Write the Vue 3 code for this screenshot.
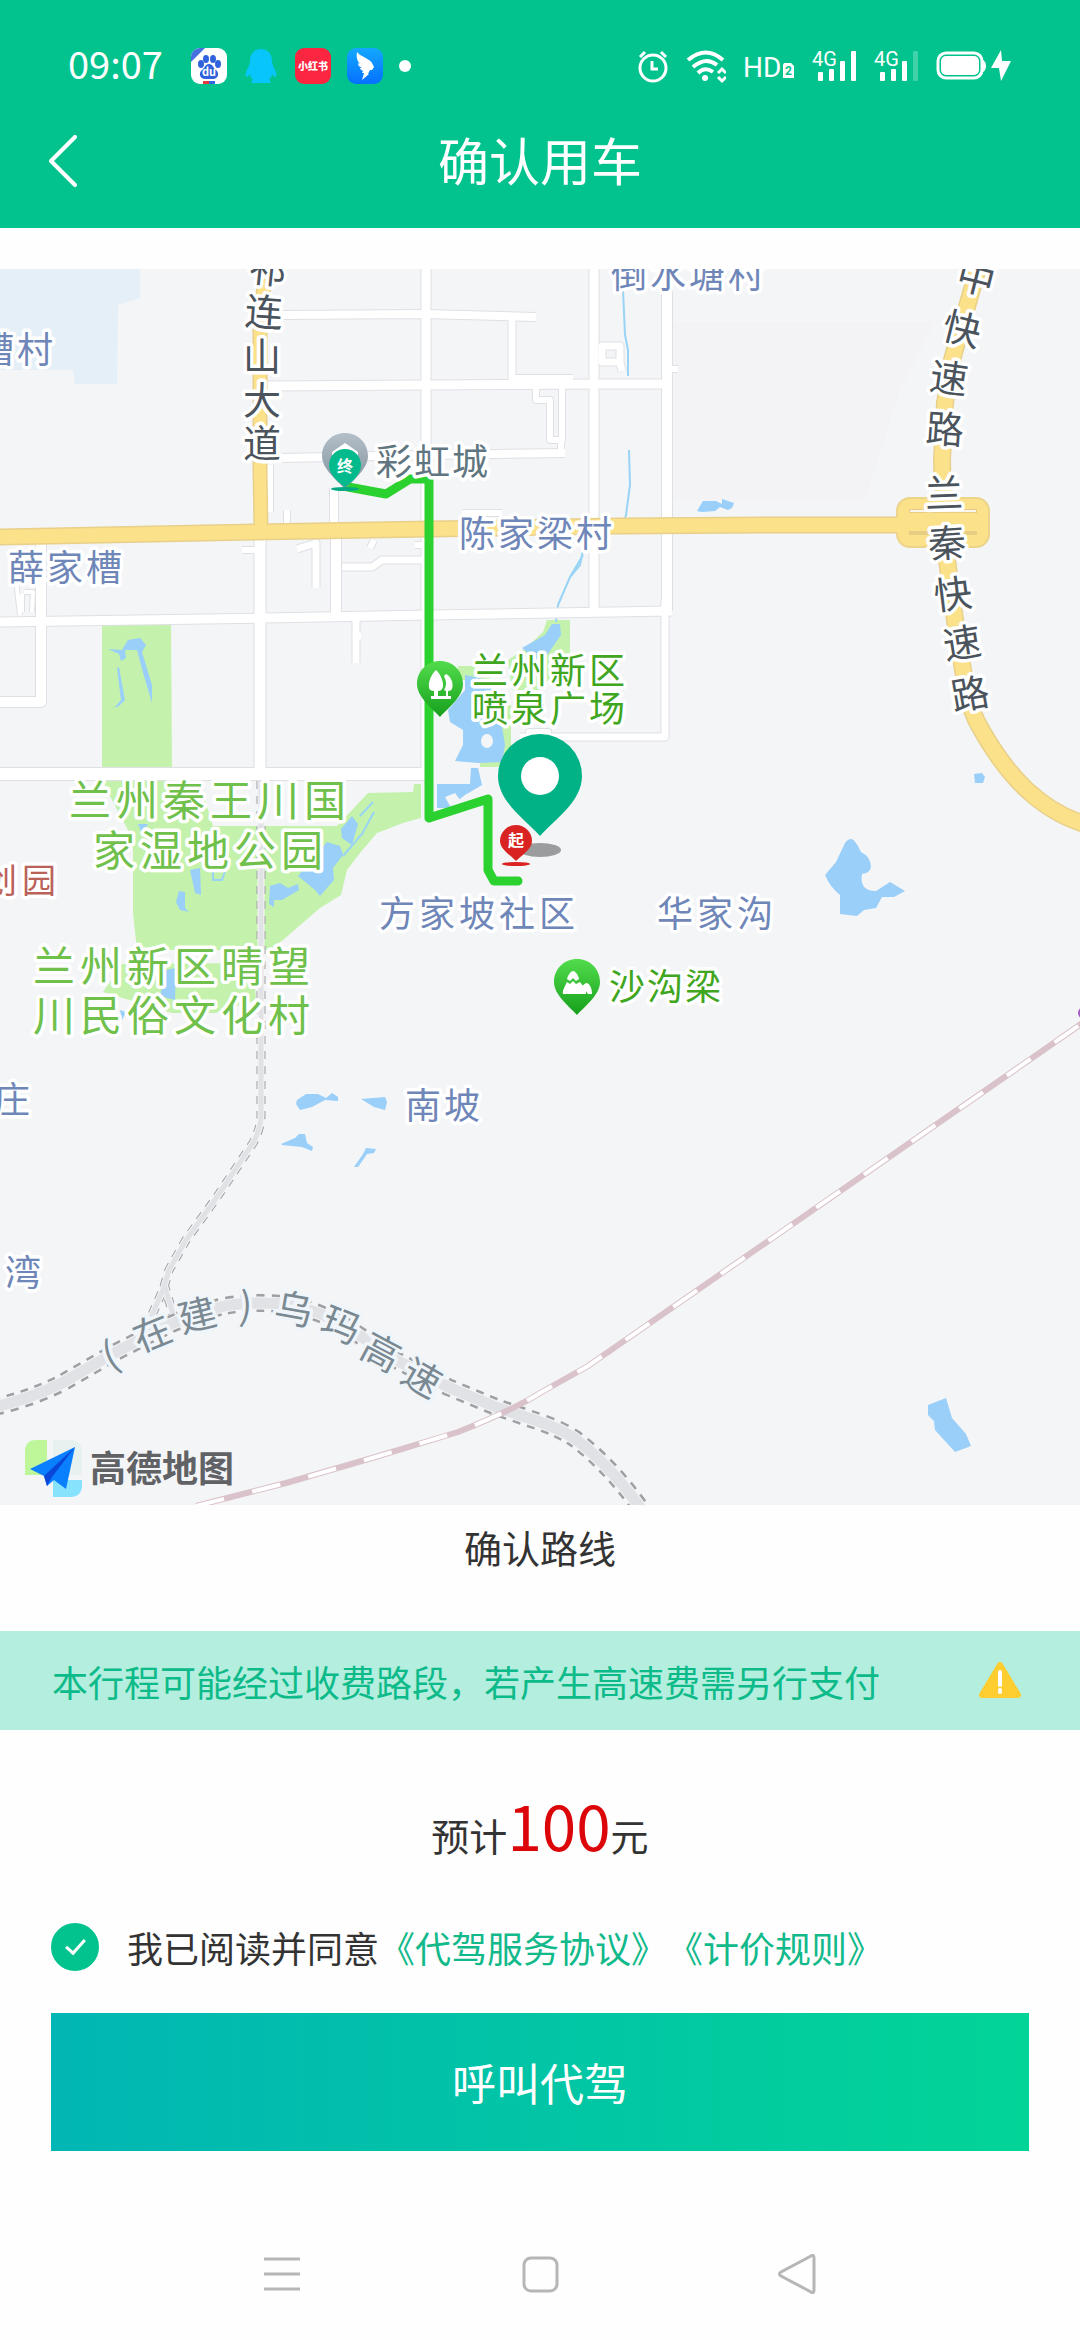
<script setup>
import { ref } from 'vue'

const agreed = ref(true)

const range = (n) => Array.from({ length: n }, (_, i) => i)
const spread = (label) => range(label.t.length).map((i) => label.x + i * label.step).join(' ')

const streets = [
  { d: 'M426 262V779', w: 9 },
  { d: 'M280 315L425 314L536 317', w: 8 },
  { d: 'M512 317V380', w: 7 },
  { d: 'M268 386L425 385L600 384L668 384', w: 9 },
  { d: 'M283 458L425 455L565 453', w: 8 },
  { d: 'M594 262V612', w: 9 },
  { d: 'M667 285V611', w: 10 },
  { d: 'M665 600V737H520', w: 7 },
  { d: 'M-5 622L265 618L430 615L672 611', w: 9 },
  { d: 'M41 540V702H-5', w: 10 },
  { d: 'M16 580L20 615M24 592H33L32 612M22 594V612', w: 4 },
  { d: 'M260 535V778', w: 11 },
  { d: 'M-5 774H425', w: 12 },
  { d: 'M334 488V528', w: 8 },
  { d: 'M336 538V614', w: 10 },
  { d: 'M356 617V663M356 636H361', w: 7 },
  { d: 'M242 550H256', w: 6 },
  { d: 'M297 549L316 543V588', w: 7 },
  { d: 'M342 567H372L382 560H426', w: 7 },
  { d: 'M270 465V512M287 510V528M374 540L370 548M415 545H426', w: 6 },
  { d: 'M602 346H620V362H602ZM620 362L622 371', w: 7 },
  { d: 'M515 378H573M536 386V400H550V440H562V386M540 453H561V442', w: 6 },
  { d: 'M672 369H678M462 513H502M529 740V732H548V740', w: 6 }
]

const highways = [
  { d: 'M-5 537L255 532L430 529L620 526L764 525H900', w: 14 },
  { d: 'M266 262L260 330V470L261 530', w: 12 },
  { d: 'M980 262L970 296L952 360L945 403L942 460L943 500L947 560L955 620L963 670Q967 700 976 720Q1000 765 1027 790T1085 824', w: 15 }
]

const greens = [
  'M102 625H171L172 768H102Z',
  'M103 781H170L185 790L205 800L213 826H337L368 793L413 792L414 784H421V818L403 823L377 833L360 853L347 870L341 895L320 908L283 940L270 950H137L133 913V850L128 830L112 800Z',
  'M103 992L122 964L253 963L256 1000L215 1013H172Z',
  'M508 660L527 647L543 632L547 620H570V655L540 690H512Z',
  'M458 666H490V680H458ZM496 705H511V767H480V760L500 755Z'
]

const waters = [
  'M108 649L122 650L128 640L140 638L146 645L142 652L152 685V703L144 676L137 650H125L126 658L121 661L119 654Z',
  'M119 667L125 700L119 706L114 708L121 700L117 668Z',
  'M190 870L200 868L201 895L195 893ZM179 891L185 892V908L189 912L180 910L176 902Z',
  'M138 824H148L142 834ZM166 970L176 968L175 1000L160 996ZM120 1010L126 1012L122 1020Z',
  'M327 842L340 846L343 855L333 868L334 880L320 896L315 890L298 876ZM341 829L352 816L358 824L352 845L342 838ZM270 886L280 883L288 888L298 884L299 890L282 900L274 900V907L269 904Z',
  'M465 675L490 680L496 690L505 745L502 762L478 763L455 761L463 745V730L450 722L448 710L465 690Z',
  'M522 648L545 635L552 624H560L561 635L552 648L540 665L530 655Z',
  'M471 768H478L482 785L465 795L448 808H437V784H470Z',
  'M697 511L703 501L716 501L722 504V499L734 503L732 508L728 510L720 507L715 511L702 512Z',
  'M974 774L982 773L985 777L983 783H975Z',
  'M851 839Q855 839 861 852Q871 857 871 867Q870 873 862 874Q859 891 876 891L890 882L905 891L894 897H882L876 908L864 910L857 916L840 914V895Q830 887 825 875L836 862L845 843Q848 839 851 839Z',
  'M297 1100L306 1094L318 1094L326 1098L332 1093L338 1097V1101L325 1100L312 1107L300 1110L296 1104Z',
  'M361 1099L385 1097L387 1102L385 1110L374 1107Z',
  'M281 1144L295 1138L299 1134L305 1134L307 1143L313 1147L312 1151L302 1147L282 1145Z',
  'M366 1148L376 1149L374 1153L367 1154L358 1167L354 1167L363 1154Z',
  'M928 1405L946 1398L952 1418L966 1434L971 1446L955 1452L935 1430L934 1421L928 1415Z'
]

const labels = [
  { t: '槽村', x: -4, y: 363, step: 39, c: 'town' },
  { t: '薛家槽', x: 26, y: 581, step: 39, c: 'town' },
  { t: '彩虹城', x: 394, y: 475, step: 38, c: 'poi' },
  { t: '陈家梁村', x: 477, y: 547, step: 39, c: 'town' },
  { t: '倒水塘村', x: 629, y: 288, step: 39, c: 'town' },
  { t: '创园', x: 0, y: 893, step: 39, c: 'mall' },
  { t: '兰州秦王川国', x: 90, y: 816, step: 47, c: 'park' },
  { t: '家湿地公园', x: 114, y: 866, step: 47, c: 'park' },
  { t: '兰州新区晴望', x: 54, y: 982, step: 47, c: 'park' },
  { t: '川民俗文化村', x: 54, y: 1031, step: 47, c: 'park' },
  { t: '兰州新区', x: 490, y: 684, step: 39, c: 'scenic' },
  { t: '喷泉广场', x: 490, y: 722, step: 39, c: 'scenic' },
  { t: '沙沟梁', x: 627, y: 1000, step: 38, c: 'scenic' },
  { t: '方家坡社区', x: 397, y: 927, step: 40, c: 'town' },
  { t: '华家沟', x: 675, y: 927, step: 40, c: 'town' },
  { t: '南坡', x: 423, y: 1119, step: 39, c: 'town' },
  { t: '庄', x: 12, y: 1113, step: 39, c: 'town' },
  { t: '湾', x: 23, y: 1286, step: 39, c: 'town' }
]

const roadNames = [
  { t: '祁', x: 268, y: 269, r: 6 }, { t: '连', x: 264, y: 312, r: 4 },
  { t: '山', x: 262, y: 356, r: 0 }, { t: '大', x: 262, y: 400, r: 0 },
  { t: '道', x: 262, y: 443, r: 0 },
  { t: '中', x: 976, y: 278, r: 14 }, { t: '快', x: 962, y: 329, r: 14 },
  { t: '速', x: 949, y: 378, r: 8 }, { t: '路', x: 945, y: 429, r: 4 },
  { t: '兰', x: 944, y: 493, r: -2 }, { t: '秦', x: 947, y: 543, r: -4 },
  { t: '快', x: 953, y: 594, r: -7 }, { t: '速', x: 962, y: 643, r: -9 },
  { t: '路', x: 970, y: 694, r: -10 }
]

const plannedNames = [
  { t: '(', x: 110, y: 1355, r: -24 }, { t: '在', x: 152, y: 1333, r: -22 },
  { t: '建', x: 197, y: 1315, r: -14 }, { t: ')', x: 246, y: 1306, r: 4 },
  { t: '乌', x: 294, y: 1309, r: 10 }, { t: '玛', x: 341, y: 1325, r: 22 },
  { t: '高', x: 381, y: 1352, r: 28 }, { t: '速', x: 422, y: 1378, r: 30 }
]

const planned = [
  { d: 'M261 781V1115Q261 1128 253 1143L217 1197L186 1240L169 1270L163 1290L151 1317M164 1284L177 1327', w: 9, in: 5 },
  { d: 'M-6 1407Q30 1399 62 1383L114 1353L155 1332Q190 1314 220 1307T293 1305Q320 1312 344 1325L396 1360L448 1387L496 1407L540 1422Q560 1429 574 1438Q610 1465 642 1510', w: 18, in: 11 }
]

const railway = 'M196 1506L286 1483L372 1458L458 1432Q515 1409 540 1393L588 1366L1084 1022'
</script>

<template>
  <div class="page">
    <header class="top">
      <div class="status">
        <span class="time">09:07</span>
        <div class="apps">
          <svg width="36" height="36" viewBox="0 0 36 36">
            <defs><clipPath id="tile"><rect width="36" height="36" rx="9" /></clipPath></defs>
            <g clip-path="url(#tile)">
              <rect width="36" height="36" fill="#fff" />
              <path d="M0 0H14L0 14Z" fill="#4571e0" />
              <path d="M12 33H18V36H12Z" fill="#e43b3b" /><path d="M18 33H24V36H18Z" fill="#3567e0" />
            </g>
            <g fill="#2f62dd">
              <ellipse cx="10" cy="16" rx="3" ry="4" /><ellipse cx="15" cy="11" rx="3" ry="4" />
              <ellipse cx="22" cy="11" rx="3" ry="4" /><ellipse cx="27" cy="16" rx="3" ry="4" />
              <path d="M18 16C22 16 22 20 25 22C29 25 27 31 22 31H14C9 31 7 25 11 22C14 20 14 16 18 16Z" />
            </g>
            <text x="18" y="28" text-anchor="middle" font-size="11" font-weight="700" fill="#fff">du</text>
          </svg>
          <svg width="36" height="36" viewBox="0 0 36 36">
            <path fill="#08c5fb" d="M18 1C25 1 29 6 29 13C29 16 30 17 31 20C34 25 34 29 32 29C31 29 29 26 29 26C29 29 27 31 26 32C28 33 28 35 27 35H9C8 35 8 33 10 32C9 31 7 29 7 26C7 26 5 29 4 29C2 29 2 25 5 20C6 17 7 16 7 13C7 6 11 1 18 1Z" />
          </svg>
          <svg width="36" height="36" viewBox="0 0 36 36">
            <rect width="36" height="36" rx="9" fill="#fd2640" />
            <text x="18" y="22" text-anchor="middle" font-size="10" font-weight="900" fill="#fff">小红书</text>
          </svg>
          <svg width="36" height="36" viewBox="0 0 36 36">
            <defs><linearGradient id="wing" x2="0" y2="1"><stop stop-color="#14a8ff" /><stop offset="1" stop-color="#0570ff" /></linearGradient></defs>
            <rect width="36" height="36" rx="9" fill="url(#wing)" />
            <path fill="#fff" d="M10 4C14 9 22 10 25 15L27 19L25 22H23L21 26H22L15 32L17 25H15L16 23C14 22 13 21 13 20H15C12 19 11 17 11 15L13 16C10 13 9 9 10 4Z" />
          </svg>
          <i class="more"></i>
        </div>
        <div class="signals">
          <svg width="32" height="36" viewBox="0 0 32 36" fill="none" stroke="#fff" stroke-width="3">
            <circle cx="16" cy="20" r="13" /><path d="M15 13V21H21M3 9L8 4M29 9L24 4" />
          </svg>
          <svg width="40" height="36" viewBox="0 0 40 36" fill="none" stroke="#fff" stroke-width="4">
            <path d="M2 12Q20 -3 37 12M7 19Q20 8 31 17M12 25Q19 18 27 24" />
            <circle cx="19" cy="30" r="3" fill="#fff" stroke="none" />
            <path d="M32 25L36 21L40 25M32 29L36 33L40 29" stroke-width="3" />
          </svg>
          <svg class="narrow" width="52" height="36" viewBox="0 0 52 36" fill="#fff">
            <text x="0" y="29" font-size="28">HD</text>
            <path d="M41 15H48L51 18V30H40V17Z" /><text x="42" y="27" font-size="12" font-weight="700" fill="#02c38e">2</text>
          </svg>
          <svg v-for="n in 2" :key="n" class="narrow" width="45" height="36" viewBox="0 0 45 36" fill="#fff">
            <text x="0" y="18" font-size="20">4G</text>
            <rect x="6" y="24" width="5" height="9" rx="1" /><rect x="17" y="21" width="5" height="12" rx="1" />
            <rect x="28" y="13" width="5" height="20" rx="1" />
            <rect x="39" y="3" width="5" height="30" rx="1" :opacity="n === 2 ? 0.25 : 1" />
          </svg>
          <svg width="75" height="36" viewBox="0 0 75 36" fill="#fff">
            <rect x="2" y="5" width="44" height="25" rx="8" fill="none" stroke="#fff" stroke-width="3" />
            <rect x="5" y="8" width="38" height="19" rx="5" /><path d="M47 12Q50 14 50 18T47 24Z" />
            <path d="M65 2L55 20H63L65 33L75 13H66Z" />
          </svg>
        </div>
      </div>
      <div class="bar">
        <button class="back" type="button" aria-label="返回">
          <svg width="28" height="52" viewBox="0 0 28 52" fill="none" stroke="#fff" stroke-width="4" stroke-linecap="round" stroke-linejoin="round"><path d="M26 2L2 26L26 50" /></svg>
        </button>
        <h1>确认用车</h1>
      </div>
    </header>

    <svg class="map" viewBox="0 269 1080 1236">
      <defs>
        <linearGradient id="leaf" x2="0" y2="1"><stop stop-color="#52dc4c" /><stop offset="1" stop-color="#169f1c" /></linearGradient>
        <linearGradient id="steel" x2="0" y2="1"><stop stop-color="#b4bfc8" /><stop offset="1" stop-color="#7f909c" /></linearGradient>
        <path id="pin" d="M0 -56C13 -56 23 -46 23 -33C23 -20 8 -9 0 0C-8 -9 -23 -20 -23 -33C-23 -46 -13 -56 0 -56Z" />
      </defs>
      <rect y="269" width="1080" height="1236" fill="#f4f5f7" />
      <path fill="#f3f3f6" d="M672 322H935L900 390L865 500H672Z" />
      <path fill="#e4eff7" d="M0 269H140V298L118 305L117 384H75L73 370H0Z" />
      <path v-for="d in greens" :key="d" :d="d" fill="#c4f2ac" />
      <path v-for="d in waters" :key="d" :d="d" fill="#99cff9" />
      <ellipse cx="487" cy="741" rx="6" ry="7" fill="#f4f5f7" />
      <path d="M445 797L455 793L460 800L450 806Z" fill="#f4f5f7" />
      <g fill="none" stroke="#99d3f5" stroke-width="2">
        <path d="M623 290L625 335L628 350V376M629 450L630 485L626 515L622 526M558 605L570 577L583 555M570 577L580 565L583 550M558 605L556 622" />
        <path d="M343 856L362 834L374 812M213 872V880H222L226 868M360 816L373 802" />
      </g>

      <g v-for="p in planned" :key="p.d" fill="none">
        <path :d="p.d" stroke="#9fa0a4" :stroke-width="p.w" stroke-dasharray="8 7" />
        <path :d="p.d" stroke="#f4f5f7" :stroke-width="p.in + 2" />
        <path :d="p.d" stroke="#e1e2e5" :stroke-width="p.in" />
      </g>
      <g fill="none">
        <path :d="railway" stroke="#d9c2ca" stroke-width="6" />
        <path :d="railway" stroke="#fff" stroke-width="4" stroke-dasharray="29 29" />
      </g>
      <circle cx="1084" cy="1013" r="6" fill="#a35ac4" />

      <g fill="none" stroke-linejoin="round">
        <path v-for="s in streets" :key="s.d" :d="s.d" stroke="#dfe0e5" :stroke-width="s.w + 2" />
        <path v-for="s in streets" :key="s.d" :d="s.d" stroke="#fff" :stroke-width="s.w" />
        <path v-for="s in highways" :key="s.d" :d="s.d" stroke="#e8d08a" :stroke-width="s.w + 3" />
        <rect x="897" y="498" width="92" height="49" rx="13" fill="#fbe18a" stroke="#ecd48a" stroke-width="2" />
        <path v-for="s in highways" :key="s.d" :d="s.d" stroke="#fbe18a" :stroke-width="s.w" />
        <path d="M909 511H977M909 533H977" stroke="#e6cd83" stroke-width="4" />
        <path d="M910 511H976" stroke="#f8f6ee" stroke-width="2" />
        <path d="M518 881H494L488 870V799L429 818V479H410L386 494L348 487" stroke="#2bd12f" stroke-width="9" stroke-linecap="round" />
      </g>

      <text v-for="l in labels" :key="l.t" class="label" :class="l.c" :x="spread(l)" :y="l.y">{{ l.t }}</text>
      <text v-for="(n, i) in roadNames" :key="'r' + i" class="label road" y="14" :transform="`translate(${n.x} ${n.y}) rotate(${n.r})`">{{ n.t }}</text>
      <text v-for="(n, i) in plannedNames" :key="'p' + i" class="label planned" y="14" :transform="`translate(${n.x} ${n.y}) rotate(${n.r})`">{{ n.t }}</text>

      <g transform="translate(345 489)">
        <use href="#pin" fill="url(#steel)" /><path d="M0 -46L-13 -37V-34H13V-37Z" fill="#fff" />
        <ellipse rx="14" ry="2" fill="#02a983" />
        <path d="M0 -40C9 -40 16 -33 16 -24C16 -14 6 -6 0 -2C-6 -6 -16 -14 -16 -24C-16 -33 -9 -40 0 -40Z" fill="#02ba8c" />
        <text class="mark" y="-17">终</text>
      </g>
      <g transform="translate(440 717)">
        <use href="#pin" fill="url(#leaf)" />
        <path fill="#fff" d="M-4 -47C0 -44 4 -35 3 -30Q2 -26 -2 -26V-21H6V-26L4 -27Q8 -33 4 -41L6 -43C11 -41 14 -33 12 -28Q11 -26 8 -26V-21H11V-18H-9V-21H-6V-26Q-11 -26 -11 -30C-12 -35 -8 -44 -4 -47Z" />
      </g>
      <g transform="translate(577 1015)">
        <use href="#pin" fill="url(#leaf)" />
        <path fill="#fff" d="M-4 -44C-1 -44 2 -38 2 -36L-1 -34L-4 -37L-7 -34L-10 -36C-9 -40 -6 -44 -4 -44ZM-10 -33L-7 -31L-4 -34L-1 -31L3 -33L9 -25V-21H-14C-15 -24 -12 -29 -10 -33ZM9 -32C13 -32 15 -26 15 -21H11L5 -29Z" />
      </g>
      <ellipse cx="540" cy="850" rx="21" ry="7" fill="#9b9c9e" />
      <path fill="#00b286" d="M540 836C526 820 498 802 498 776A42 42 0 1 1 582 776C582 802 554 820 540 836Z" />
      <circle cx="540" cy="776" r="19" fill="#fff" />
      <g transform="translate(516 861)">
        <ellipse cy="3" rx="14" ry="2" fill="#d22" />
        <path d="M0 0C-6 -6 -16 -12 -16 -20A16 16 0 1 1 16 -20C16 -12 6 -6 0 0Z" fill="#d92323" />
        <text class="mark" y="-15">起</text>
      </g>

      <path d="M36 1440H47V1475H25V1452Q25 1440 36 1440Z" fill="#bdf79a" />
      <path d="M53 1480H82V1485Q82 1497 70 1497H53Z" fill="#86e2fd" />
      <path d="M53 1440H70Q82 1440 82 1452V1475H53Z" fill="#e6f1f0" />
      <path d="M75 1447L30 1469L44 1476L47 1486L54 1480L66 1489Z" fill="#0a80ff" />
      <path d="M75 1447L44 1476L47 1486L52 1477Z" fill="#0a46d8" />
      <text class="brand" x="90" y="1482">高德地图</text>
    </svg>

    <h2>确认路线</h2>

    <div class="notice">
      <p>本行程可能经过收费路段，若产生高速费需另行支付</p>
      <svg width="44" height="40" viewBox="0 0 44 40">
        <path d="M22 4L40 34H4Z" fill="#fecd2f" stroke="#fecd2f" stroke-width="6" stroke-linejoin="round" />
        <path d="M22 11V24M22 29V31" stroke="#fff" stroke-width="4" stroke-linecap="round" />
      </svg>
    </div>

    <p class="price">预计<strong>100</strong>元</p>

    <div class="agree">
      <input id="agree" v-model="agreed" type="checkbox" />
      <label for="agree">我已阅读并同意</label><a href="#service">《代驾服务协议》</a><a href="#pricing">《计价规则》</a>
    </div>

    <button class="call" type="button">呼叫代驾</button>

    <nav class="keys">
      <button type="button" aria-label="菜单">
        <svg width="40" height="40" viewBox="0 0 40 40"><path d="M2 5H38M2 20H38M2 35H38" /></svg>
      </button>
      <button type="button" aria-label="主页">
        <svg width="40" height="40" viewBox="0 0 40 40"><rect x="4" y="4" width="33" height="33" rx="7" /></svg>
      </button>
      <button type="button" aria-label="后退">
        <svg width="40" height="40" viewBox="0 0 40 40"><path d="M33 2Q36 0 36 4V36Q36 40 33 38L3 22Q0 20 3 18Z" /></svg>
      </button>
    </nav>
  </div>
</template>

<style>
body {
  margin: 0;
  background: #fefefe;
}
</style>

<style scoped>
.page {
  font-family: "Noto Sans CJK SC", "Noto Sans", sans-serif;
  color: #333;
  text-spacing-trim: space-all;
}
.page svg {
  display: block;
}
h1,
h2,
p {
  margin: 0;
  font-weight: 400;
}
button {
  padding: 0;
  border: 0;
  background: none;
  font: inherit;
}
.top {
  background: #02c38e;
  color: #fff;
}
.status {
  display: flex;
  align-items: center;
  height: 94px;
  padding: 38px 69px 0 68px;
  box-sizing: border-box;
}
.time {
  align-self: flex-start;
  font-size: 38px;
  line-height: 50px;
}
.apps {
  display: flex;
  align-items: center;
  gap: 16px;
  margin-left: 28px;
}
.more {
  width: 12px;
  height: 12px;
  border-radius: 50%;
  background: #fff;
}
.signals {
  display: flex;
  align-items: center;
  gap: 17px;
  margin-left: auto;
}
.narrow {
  font-family: "Liberation Sans Narrow", Roboto, sans-serif;
}
.bar {
  display: grid;
  grid-template-columns: 77px 1fr 77px;
  align-items: center;
  height: 134px;
}
.back {
  justify-self: end;
}
h1 {
  padding-bottom: 4px;
  font-size: 51px;
  line-height: 72px;
  text-align: center;
}
.map {
  width: 100%;
  height: auto;
  margin-top: 41px;
}
.label {
  font-size: 36px;
  text-anchor: middle;
  paint-order: stroke;
  stroke: #fff;
  stroke-width: 7px;
  stroke-linejoin: round;
}
.town {
  fill: #6f86b8;
}
.poi {
  fill: #5f7580;
}
.mall {
  font-size: 34px;
  fill: #ba6259;
}
.park {
  font-size: 42px;
  fill: #70c04c;
}
.scenic {
  fill: #40a620;
}
.road {
  font-size: 38px;
  fill: #4b545c;
}
.planned {
  font-size: 38px;
  fill: #7a8992;
  stroke: #f0f5fa;
}
.mark {
  font-size: 16px;
  font-weight: 700;
  text-anchor: middle;
  fill: #fff;
}
.brand {
  font-size: 36px;
  font-weight: 700;
  fill: #606266;
}
h2 {
  margin-top: 14px;
  font-size: 38px;
  line-height: 56px;
  text-align: center;
}
.notice {
  display: flex;
  align-items: center;
  justify-content: space-between;
  margin-top: 56px;
  padding: 0 58px 0 52px;
  height: 99px;
  background: #b3eede;
  color: #0dba89;
  font-size: 36px;
}
.price {
  margin-top: 59px;
  font-size: 38px;
  line-height: 92px;
  text-align: center;
}
.price strong {
  color: #dc0509;
  font-size: 62px;
  font-weight: 400;
  line-height: 62px;
}
.agree {
  display: flex;
  align-items: center;
  margin-top: 39px;
  padding: 0 51px;
  font-size: 36px;
  line-height: 54px;
}
.agree input {
  display: grid;
  place-items: center;
  width: 48px;
  height: 48px;
  margin: 0 28px 0 0;
  border: 2px solid #02c38e;
  border-radius: 50%;
  appearance: none;
}
.agree input:checked {
  background: #02c38e;
}
.agree input:checked::after {
  content: "";
  width: 8px;
  height: 16px;
  margin-bottom: 6px;
  border: solid #fff;
  border-width: 0 3px 3px 0;
  transform: rotate(42deg);
}
.agree a {
  color: #12b98a;
  text-decoration: none;
}
.call {
  display: block;
  width: calc(100% - 102px);
  height: 138px;
  margin: 39px 51px 0;
  background: linear-gradient(90deg, #01b6b4, #02d497);
  color: #fff;
  font-size: 44px;
}
.keys {
  display: grid;
  grid-template-columns: repeat(3, 1fr);
  justify-items: center;
  padding: 103px 153px 46px;
}
.keys svg {
  fill: none;
  stroke: #b6b6b6;
  stroke-width: 3px;
}
</style>
